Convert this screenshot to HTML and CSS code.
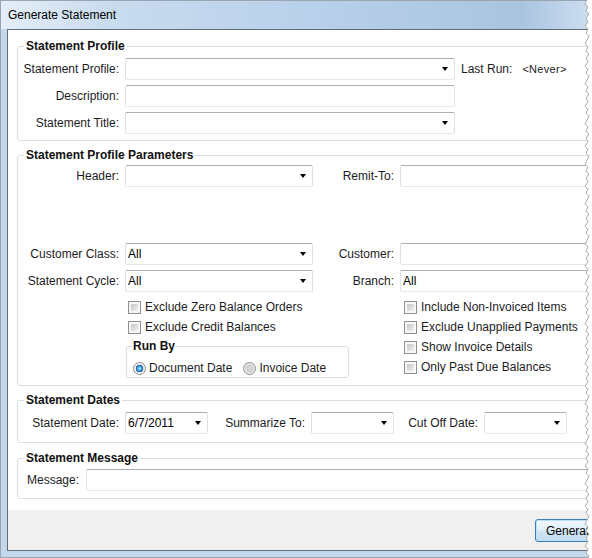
FILE: index.html
```html
<!DOCTYPE html>
<html lang="en">
<head>
    <meta charset="UTF-8">
    <title>Generate Statement</title>
    <link rel="stylesheet" href="styles.css">
</head>
<body>
    <div class="window">
        <div class="titlebar">Generate Statement</div>
        <div class="client">
            <div class="content">
                <fieldset class="group profile">
                    <legend>Statement Profile</legend>
                    <div class="row">
                        <span class="lbl">Statement Profile:</span>
                        <div class="field combo w330"><span class="arrow"></span></div>
                        <span class="last-run">Last Run:</span>
                        <span class="never">&lt;Never&gt;</span>
                    </div>
                    <div class="row">
                        <span class="lbl">Description:</span>
                        <div class="field w330"></div>
                    </div>
                    <div class="row">
                        <span class="lbl">Statement Title:</span>
                        <div class="field combo w330"><span class="arrow"></span></div>
                    </div>
                </fieldset>

                <fieldset class="group params">
                    <legend>Statement Profile Parameters</legend>
                    <div class="row">
                        <span class="lbl">Header:</span>
                        <div class="field combo w188"><span class="arrow"></span></div>
                        <span class="lbl lbl-right">Remit-To:</span>
                        <div class="field wide"></div>
                    </div>
                    <div class="row row-class">
                        <span class="lbl">Customer Class:</span>
                        <div class="field combo w188"><span class="value">All</span><span class="arrow"></span></div>
                        <span class="lbl lbl-right">Customer:</span>
                        <div class="field wide"></div>
                    </div>
                    <div class="row">
                        <span class="lbl">Statement Cycle:</span>
                        <div class="field combo w188"><span class="value">All</span><span class="arrow"></span></div>
                        <span class="lbl lbl-right">Branch:</span>
                        <div class="field wide"><span class="value">All</span></div>
                    </div>
                    <div class="options">
                        <div class="options__left">
                            <div class="option"><span class="check"></span>Exclude Zero Balance Orders</div>
                            <div class="option"><span class="check"></span>Exclude Credit Balances</div>
                            <fieldset class="group run-by">
                                <legend>Run By</legend>
                                <div class="radios">
                                    <span class="radio radio_on"></span>Document Date
                                    <span class="radio radio_second"></span>Invoice Date
                                </div>
                            </fieldset>
                        </div>
                        <div class="options__right">
                            <div class="option"><span class="check"></span>Include Non-Invoiced Items</div>
                            <div class="option"><span class="check"></span>Exclude Unapplied Payments</div>
                            <div class="option"><span class="check"></span>Show Invoice Details</div>
                            <div class="option"><span class="check"></span>Only Past Due Balances</div>
                        </div>
                    </div>
                </fieldset>

                <fieldset class="group dates">
                    <legend>Statement Dates</legend>
                    <div class="row">
                        <span class="lbl">Statement Date:</span>
                        <div class="field combo w83"><span class="value">6/7/2011</span><span class="arrow"></span></div>
                        <span class="lbl lbl-sum">Summarize To:</span>
                        <div class="field combo w83"><span class="arrow"></span></div>
                        <span class="lbl lbl-cut">Cut Off Date:</span>
                        <div class="field combo w83"><span class="arrow"></span></div>
                    </div>
                </fieldset>

                <fieldset class="group message">
                    <legend>Statement Message</legend>
                    <div class="row">
                        <span class="lbl lbl-msg">Message:</span>
                        <div class="field w560"></div>
                    </div>
                </fieldset>
            </div>
            <div class="footer">
                <button type="button" class="btn">Generate</button>
            </div>
        </div>
    </div>

    <svg class="torn" width="10" height="558" xmlns="http://www.w3.org/2000/svg">
        <defs>
            <pattern id="tear" patternUnits="userSpaceOnUse" width="10" height="40">
                <polygon points="5,0 3,4 6,7 4,11 7,14 4,18 6,22 3,26 6,29 4,33 7,36 5,40 10,40 10,0" fill="#fff"/>
                <polyline points="5,0 3,4 6,7 4,11 7,14 4,18 6,22 3,26 6,29 4,33 7,36 5,40" fill="none" stroke="#a9a9a9" stroke-width="1"/>
            </pattern>
        </defs>
        <rect width="10" height="558" fill="url(#tear)"/>
    </svg>
</body>
</html>
```

FILE: styles.css
```css
html, body {
    margin: 0;
    overflow: hidden;
    background: #fff;
}
body {
    font-family: "Liberation Sans", Arial, sans-serif;
    font-size: 12px;
    color: #1c1c24;
    width: 592px;
    height: 558px;
    position: relative;
}
.window {
    width: 640px;
    height: 558px;
    box-sizing: border-box;
    border: 1px solid #9aa5b1;
    padding: 0 6px 6px 6px;
    background: #c4d8ed;
}
.titlebar {
    height: 28px;
    line-height: 28px;
    margin: 0 -6px;
    padding-left: 7px;
    color: #000;
    background: linear-gradient(to right, #e4eef8 0, #c9dbef 110px, #b9d1ea 300px, #aac4e0 520px, #cadcf0 585px);
}
.client {
    border: 1px solid #5f6c7a;
    border-right: none;
}
.content {
    height: 480px;
    box-sizing: border-box;
    background: #fff;
    padding: 9px 0 0 9px;
}
.footer {
    height: 40px;
    box-sizing: border-box;
    background: #f0f0f0;
    padding: 9px 0 0 527px;
}

/* group boxes */
.group {
    margin: 0;
    border: 1px solid #d5dfe5;
    border-radius: 3px;
    padding: 5px 0 6px 4px;
    width: 600px;
    box-sizing: border-box;
}
.group legend {
    font-weight: bold;
    line-height: 14px;
    padding: 0 2px;
    margin-left: 2px;
    color: #111;
}
.params {
    margin-top: 7px;
    padding-top: 3px;
    padding-bottom: 7px;
}
.dates {
    margin-top: 7px;
    padding-bottom: 8px;
}
.message {
    margin-top: 8px;
    padding-top: 4px;
    padding-bottom: 7px;
}

.row {
    display: flex;
    align-items: center;
    height: 22px;
    white-space: nowrap;
}
.row + .row {
    margin-top: 5px;
}
.params .row-class {
    margin-top: 56px;
}
.lbl {
    width: 97px;
    margin-right: 6px;
    text-align: right;
    flex: none;
}
.lbl-right {
    width: 81px;
}
.lbl-sum {
    width: 97px;
}
.lbl-cut {
    width: 84px;
}
.lbl-msg {
    width: 57px;
    margin-right: 7px;
}

/* text boxes and combos */
.field {
    height: 22px;
    box-sizing: border-box;
    border: 1px solid #dbdfe6;
    border-top-color: #abadb3;
    border-bottom-color: #e3e9ef;
    border-radius: 2px;
    background: #fff;
    display: flex;
    align-items: center;
    padding: 0 3px 0 2px;
    flex: none;
    color: #000;
}
.combo {
    justify-content: space-between;
    padding-right: 6px;
}
.combo .value {
    margin-right: auto;
}
.arrow {
    width: 0;
    height: 0;
    border-left: 3.5px solid transparent;
    border-right: 3.5px solid transparent;
    border-top: 4px solid #000;
    margin-left: auto;
}
.w330 { width: 330px; }
.w188 { width: 188px; }
.w83 { width: 83px; }
.w560 { width: 560px; }
.wide { width: 220px; }

.last-run {
    margin-left: 6px;
}
.never {
    margin-left: 10px;
    font-size: 11px;
    letter-spacing: 0.3px;
}

/* options */
.options {
    display: flex;
    padding-left: 103px;
    margin-top: 5px;
}
.options__left {
    width: 276px;
}
.option {
    display: flex;
    align-items: center;
    height: 20px;
    white-space: nowrap;
}
.check {
    width: 13px;
    height: 13px;
    box-sizing: border-box;
    margin: 0 4px 0 3px;
    border: 1px solid #8e8f8f;
    padding: 2px;
    background: linear-gradient(135deg, #c6c6c6, #f0f0f0) content-box, #f7f7f7;
}
.run-by {
    width: 223px;
    margin: 2px 0 0 1px;
    padding: 6px 0 0 5px;
}
.run-by legend {
    padding: 0 1px;
    margin-left: 0;
}
.radios {
    display: flex;
    align-items: center;
    height: 18px;
    white-space: nowrap;
}
.radio {
    width: 13px;
    height: 13px;
    box-sizing: border-box;
    border-radius: 50%;
    border: 1px solid #8f8f8f;
    margin: 0 3px 0 1px;
    background: radial-gradient(circle, #d9d9d9 0, #cfcfcf 40%, #f6f6f6 75%);
}
.radio_on {
    background: radial-gradient(circle, #bfeaff 0, #3b9ce2 28%, #1c5c9b 45%, #eeeeee 52%, #fbfbfb 100%);
}
.radio_second {
    margin-left: 11px;
}

/* button */
.btn {
    width: 80px;
    height: 23px;
    font: inherit;
    color: #000;
    text-align: left;
    padding: 0 0 0 10px;
    border: 1px solid #3c7fb1;
    border-radius: 3px;
    background: linear-gradient(#f2f8fd 0, #e3eff9 48%, #cfe3f3 52%, #c4ddf0 100%);
    box-shadow: inset 0 0 0 1px #b4e2fa;
}

.torn {
    position: absolute;
    top: 0;
    left: 582px;
}
```
